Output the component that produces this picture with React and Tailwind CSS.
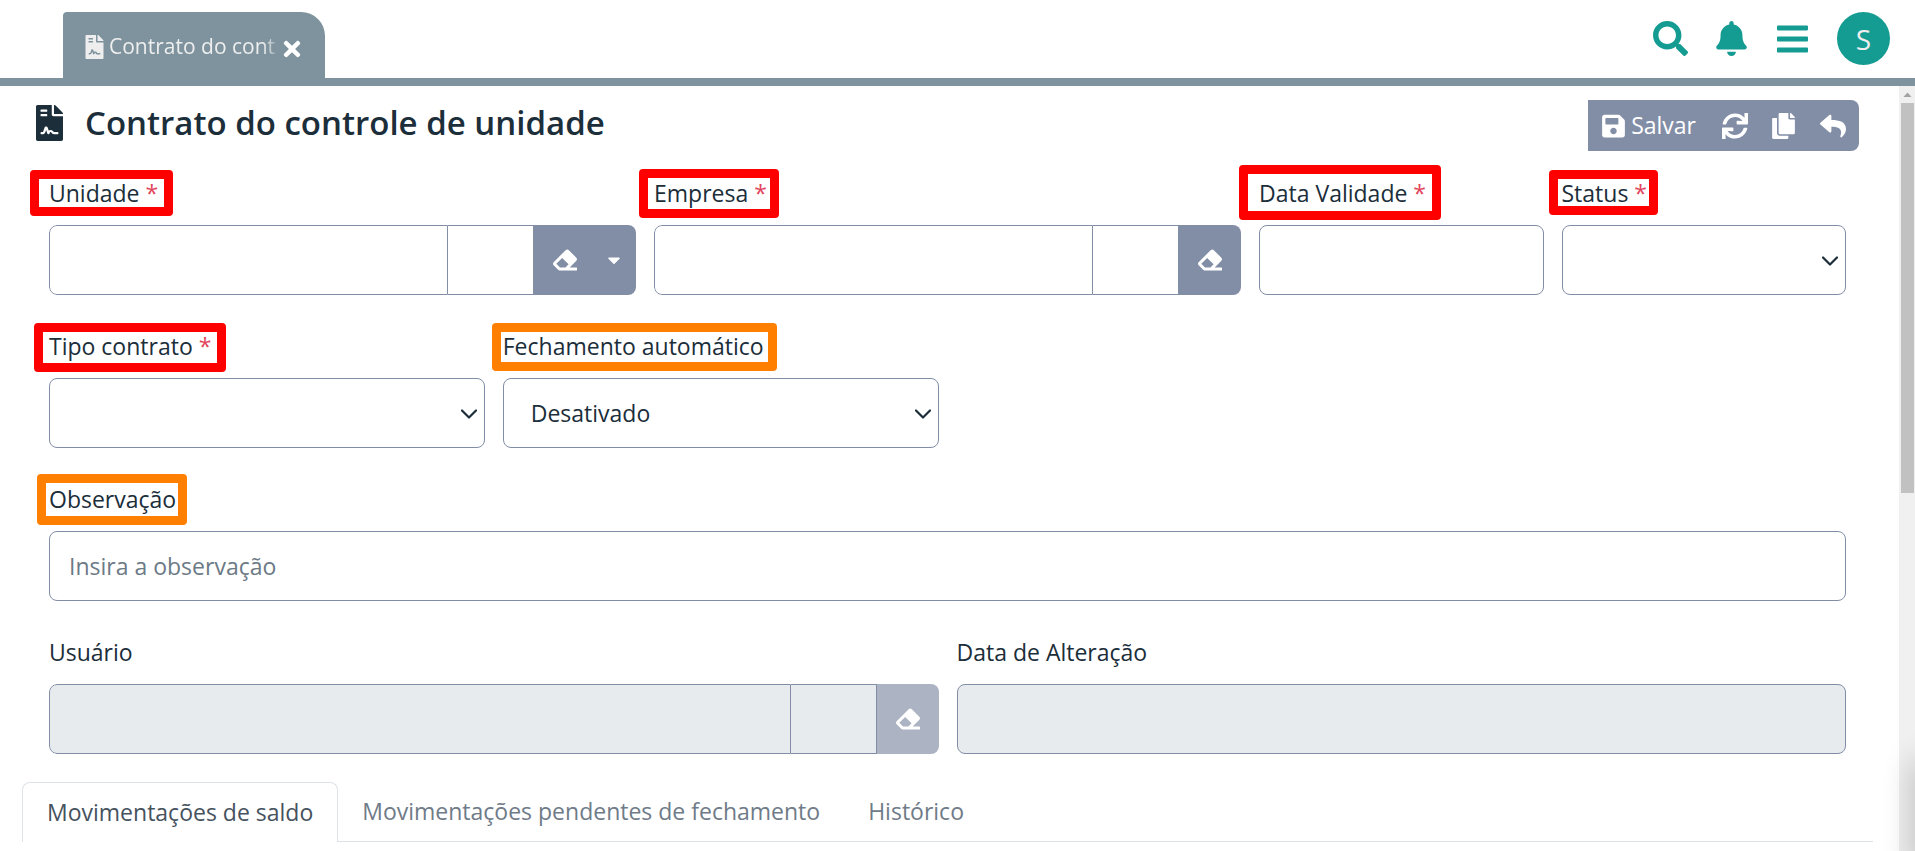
import { FaFileContract, FaSearch, FaBell, FaBars, FaSave, FaSync, FaCopy, FaReply, FaEraser, FaTimes, FaCaretDown } from "react-icons/fa";

function Mark({ className }) {
  return <span aria-hidden="true" className={`pointer-events-none absolute rounded border-[9px] ${className}`} />;
}

function Field({ id, label, required, span, mark, children }) {
  return (
    <div className={span}>
      <div className="mb-[14px] flex">
        <label htmlFor={id} className="relative whitespace-nowrap leading-[36px]">
          {label}
          {required && <span className="text-[#e2445c]"> *</span>}
          {mark && <Mark className={mark} />}
        </label>
      </div>
      {children}
    </div>
  );
}

const box = "block h-[70px] w-full min-w-0 rounded-lg border border-[#828ea6] bg-white px-[19px] outline-none placeholder:text-[#6c7a86] disabled:bg-[#e7ebee]";

function Select({ id, children }) {
  return (
    <div className="relative">
      <select id={id} className={`${box} appearance-none pl-[27px]`}>
        {children}
      </select>
      <svg viewBox="0 0 16 16" className="pointer-events-none absolute top-7 right-2 h-4 w-4" fill="none" stroke="#1b2e3a" strokeWidth="2.2" strokeLinecap="round" strokeLinejoin="round">
        <path d="M1 4.500l7 7 7-7" />
      </svg>
    </div>
  );
}

function Lookup({ id, name, menu, disabled }) {
  const btn = "flex h-full items-center justify-center bg-[#828ea6] text-white";
  return (
    <div className="flex h-[70px] w-full overflow-hidden rounded-lg">
      <input id={id} disabled={disabled} className="h-full min-w-0 flex-1 rounded-l-lg border border-[#828ea6] bg-white px-5 outline-none disabled:bg-[#e7ebee]" />
      <input aria-label={`Código ${name}`} disabled={disabled} className="h-full w-[86px] border-y border-r border-[#828ea6] bg-white px-3 outline-none disabled:bg-[#e7ebee]" />
      <button type="button" aria-label={`Limpar ${name}`} disabled={disabled} className={`${btn} w-[62px] disabled:bg-[#acb3c2]`}>
        <FaEraser className="h-6 w-6" />
      </button>
      {menu && (
        <button type="button" aria-label={`Opções ${name}`} className={`${btn} w-10 pr-1`}>
          <FaCaretDown className="h-5 w-5" />
        </button>
      )}
    </div>
  );
}

export default function App() {
  const tab = "px-6 text-[#6f7b88]";
  return (
    <div className="flex h-screen flex-col overflow-hidden bg-white font-['Open_Sans','Noto_Sans',sans-serif] text-[23px] text-[#1b2e3a]">
      <header className="flex h-[86px] shrink-0 items-end justify-between border-b-8 border-[#7e939d] pr-[25px] pl-[63px]">
        <div className="flex h-[66px] w-[262px] items-center rounded-tl rounded-tr-[24px] bg-[#7e939d] pt-1 pl-[22px] text-[#eeeeee]">
          <FaFileContract className="h-6 w-[19px] shrink-0" />
          <span className="ml-[5px] w-[174px] whitespace-nowrap text-[21px] [mask-image:linear-gradient(to_right,black_88%,transparent)]">Contrato do cont</span>
          <button type="button" aria-label="Fechar aba" className="pt-1 text-white">
            <FaTimes className="h-6 w-[18px]" />
          </button>
        </div>
        <div className="mb-[13px] flex items-center text-[#159c92]">
          <button type="button" aria-label="Pesquisar"><FaSearch className="h-[35px] w-[35px]" /></button>
          <button type="button" aria-label="Notificações" className="ml-7"><FaBell className="h-[35px] w-[31px]" /></button>
          <button type="button" aria-label="Menu" className="ml-[30px]"><FaBars className="h-9 w-[31px]" /></button>
          <button type="button" aria-label="Perfil" className="ml-[29px] h-[53px] w-[53px] rounded-full bg-[#159c92] text-[28px] text-[#eeeeee]">S</button>
        </div>
      </header>

      <div className="flex min-h-0 flex-1">
        <main className="min-w-0 flex-1 overflow-hidden">
          <div className="flex items-start justify-between pt-[14px] pr-10 pl-9">
            <div className="flex items-center">
              <FaFileContract className="h-9 w-[27px]" />
              <h1 className="ml-[22px] text-[33px] leading-[46px] font-semibold">Contrato do controle de unidade</h1>
            </div>
            <div className="flex h-[51px] items-center rounded-r-lg bg-[#828ea6] pr-[13px] pl-[14px] text-white">
              <button type="button" className="flex items-center gap-[6px]"><FaSave className="h-[26px] w-[23px]" />Salvar</button>
              <button type="button" aria-label="Atualizar" className="ml-[26px]"><FaSync className="h-[26px] w-[26px]" /></button>
              <button type="button" aria-label="Copiar" className="ml-6"><FaCopy className="h-[26px] w-[23px]" /></button>
              <button type="button" aria-label="Voltar" className="ml-[25px]"><FaReply className="h-[26px] w-[26px]" /></button>
            </div>
          </div>

          <form className="mt-[24px] grid grid-cols-12 gap-x-[18px] gap-y-[33px] pr-[53px] pl-[49px]">
            <Field id="unidade" label="Unidade" required span="col-span-4" mark="-left-[19px] -right-[15px] -top-[5px] -bottom-[5px] border-[#ff0000]">
              <Lookup id="unidade" name="unidade" menu />
            </Field>
            <Field id="empresa" label="Empresa" required span="col-span-4" mark="-left-[15px] -right-[12px] -top-[6px] -bottom-[7px] border-[#ff0000]">
              <Lookup id="empresa" name="empresa" />
            </Field>
            <Field id="validade" label="Data Validade" required span="col-span-2" mark="-left-[20px] -right-[15px] -top-[10px] -bottom-[9px] border-[#ff0000]">
              <input id="validade" className={box} />
            </Field>
            <Field id="status" label="Status" required span="col-span-2" mark="-left-[13px] -right-[11px] -top-[5px] -bottom-[4px] border-[#ff0000]">
              <Select id="status"><option></option></Select>
            </Field>
            <Field id="tipo" label="Tipo contrato" required span="col-span-3" mark="-left-[15px] -right-[15px] -top-[5px] -bottom-[8px] border-[#ff0000]">
              <Select id="tipo"><option></option></Select>
            </Field>
            <Field id="fechamento" label="Fechamento automático" span="col-span-3" mark="-left-[11px] -right-[13px] -top-[5px] -bottom-[7px] border-[#ff8000]">
              <Select id="fechamento"><option>Desativado</option></Select>
            </Field>
            <Field id="obs" label="Observação" span="col-span-12" mark="-left-[12px] -right-[11px] -top-[7px] -bottom-[8px] border-[#ff8000]">
              <input id="obs" placeholder="Insira a observação" className={box} />
            </Field>
            <Field id="usuario" label="Usuário" span="col-span-6">
              <Lookup id="usuario" name="usuário" disabled />
            </Field>
            <Field id="alteracao" label="Data de Alteração" span="col-span-6">
              <input id="alteracao" disabled className={box} />
            </Field>
          </form>

          <div role="tablist" className="mt-[28px] mr-[26px] ml-[22px] flex h-[60px] border-b border-[#dee2e9]">
            <button role="tab" aria-selected="true" type="button" className="-mb-px rounded-t-lg border border-b-0 border-[#dee2e9] bg-white px-6 text-[#46525e]">Movimentações de saldo</button>
            <button role="tab" aria-selected="false" type="button" className={tab}>Movimentações pendentes de fechamento</button>
            <button role="tab" aria-selected="false" type="button" className={tab}>Histórico</button>
          </div>
        </main>
        <div aria-hidden="true" className="relative flex w-4 shrink-0 flex-col items-end bg-[#f0f0f0]">
          <svg viewBox="0 0 16 17" className="h-[17px] w-4"><path d="M4.500 11l4-4.500 4 4.500z" fill="#a3a3a3" /></svg>
          <div className="mr-px h-[390px] w-[13px] bg-[#c1c1c1]" />
          <div className="absolute -right-4 -bottom-5 h-[110px] w-4 shadow-[0_0_30px_0_rgba(0,0,0,0.3)]" />
        </div>
      </div>
    </div>
  );
}
